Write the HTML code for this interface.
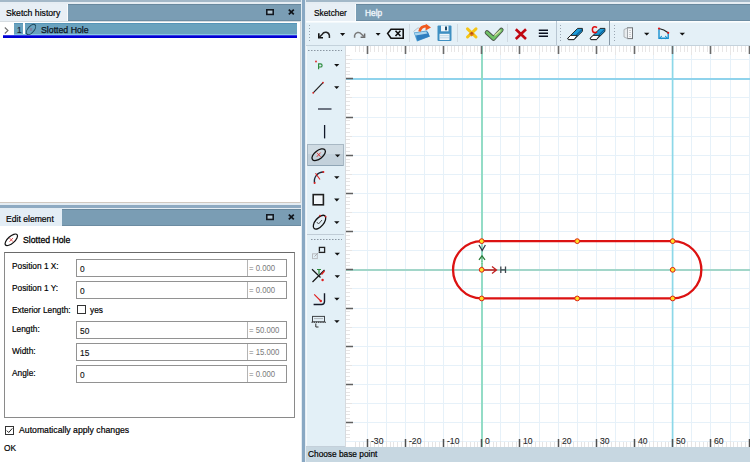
<!DOCTYPE html>
<html><head><meta charset="utf-8">
<style>
*{margin:0;padding:0;box-sizing:border-box}
html,body{width:750px;height:462px;overflow:hidden;background:#fff;font-family:"Liberation Sans",sans-serif;color:#000}
.a{position:absolute}
.t{position:absolute;white-space:pre;font-size:9.5px;line-height:12px;color:#000;-webkit-text-stroke:0.2px currentColor;transform:scaleX(0.875);transform-origin:0 0}
.inp{position:absolute;left:76px;width:211px;height:18px;border:1px solid #929292;background:#fff}
.inp .v{position:absolute;left:2.6px;top:2.9px;font-size:9.7px;line-height:12px;color:#111;white-space:pre;transform:scaleX(0.86);transform-origin:0 0;-webkit-text-stroke:0.15px #111}
.inp .d{position:absolute;left:170px;top:0;width:1px;height:16px;background:#b4b4b4}
.inp .e{position:absolute;left:171.5px;top:1.8px;font-size:9.7px;line-height:12px;color:#7a7a7a;white-space:pre;transform:scaleX(0.8);transform-origin:0 0}
.dd{position:absolute;width:0;height:0;border-left:2.5px solid transparent;border-right:2.5px solid transparent;border-top:3px solid #111}
svg{position:absolute;overflow:visible}
</style></head><body>
<!-- top strip -->
<div class="a" style="left:0;top:0;width:750px;height:2px;background:#a3b8c8"></div>
<div class="a" style="left:0;top:2px;width:750px;height:2px;background:#e6edf3"></div>

<!-- LEFT TOP PANEL -->
<div class="a" style="left:0;top:4px;width:301px;height:17px;background:#7a9db4;border-top:1px solid #68889e;border-bottom:1px solid #6c8ca2"></div>
<div class="a" style="left:0;top:4px;width:68px;height:17px;background:#e8eff5;border-right:1px solid #fafcfd"></div>
<div class="t" style="left:6px;top:7.2px;transform:scaleX(0.91)">Sketch history</div>
<svg style="left:266px;top:9px" width="8" height="7" viewBox="0 0 8 7"><rect x="0.8" y="0.8" width="6.4" height="4.6" fill="#bcd0dc" stroke="#121820" stroke-width="1.6"/><path d="M2 3.1H6" stroke="#8aa6b8" stroke-width="0.6"/></svg>
<svg style="left:287.6px;top:9px" width="7" height="6" viewBox="0 0 7 6"><path d="M0.8 0.6L5.8 5.4M5.8 0.6L0.8 5.4" stroke="#10141a" stroke-width="1.7"/></svg>
<div class="a" style="left:0;top:21px;width:301px;height:1px;background:#d6dce1"></div>
<div class="a" style="left:0;top:22px;width:301px;height:181px;background:#fff;border-right:1px solid #d8d8d8;border-bottom:1px solid #d0c8c0"></div>
<!-- tree row -->
<svg style="left:4px;top:27px" width="5" height="7" viewBox="0 0 5 7"><path d="M0.8 0.5L4 3.5L0.8 6.5" stroke="#707070" stroke-width="1.1" fill="none"/></svg>
<div class="a" style="left:14px;top:23px;width:9px;height:11px;background:#6aa2be;border-top:1px solid #5595b8"></div>
<div class="t" style="left:16.5px;top:23.5px;color:#1a2a3a">1</div>
<div class="a" style="left:25px;top:23px;width:272px;height:11px;background:#6aa2be;border-top:1px solid #5595b8"></div>
<div class="a" style="left:14px;top:34px;width:283px;height:1px;background:#88c8e0"></div>
<svg style="left:25px;top:24px" width="12" height="11" viewBox="0 0 12 11"><ellipse cx="6" cy="5.5" rx="6.2" ry="3.1" transform="rotate(-50 6 5.5)" fill="none" stroke="#1f4a5e" stroke-width="1"/><path d="M5 4L7 7M7 4L5 7" stroke="#8a6a8a" stroke-width="0.7"/></svg>
<div class="t" style="left:41px;top:24.1px;color:#0a1420;transform:scaleX(0.92);-webkit-text-stroke:0.25px #0a1420">Slotted Hole</div>
<div class="a" style="left:3px;top:35px;width:294px;height:3px;background:#0000d2;border-top:1px solid #3a3ae6"></div>

<!-- SPLITTERS -->
<div class="a" style="left:0;top:203px;width:301px;height:6px;background:#e4ecf2"></div>
<div class="a" style="left:0;top:205px;width:302px;height:3px;background:#8eaac2"></div>
<div class="a" style="left:301px;top:0;width:5px;height:462px;background:#e4ecf2"></div>
<div class="a" style="left:302px;top:0;width:3px;height:462px;background:#89a8c3"></div>

<!-- LEFT BOTTOM PANEL -->
<div class="a" style="left:0;top:209px;width:301px;height:17px;background:#7a9db4;border-top:1px solid #68889e;border-bottom:1px solid #6c8ca2"></div>
<div class="a" style="left:0;top:209px;width:62px;height:17px;background:#e3edf5"></div>
<div class="t" style="left:6px;top:213.2px;transform:scaleX(0.905)">Edit element</div>
<svg style="left:266px;top:214px" width="8" height="7" viewBox="0 0 8 7"><rect x="0.8" y="0.8" width="6.4" height="4.6" fill="#bcd0dc" stroke="#121820" stroke-width="1.6"/><path d="M2 3.1H6" stroke="#8aa6b8" stroke-width="0.6"/></svg>
<svg style="left:287.6px;top:214px" width="7" height="6" viewBox="0 0 7 6"><path d="M0.8 0.6L5.8 5.4M5.8 0.6L0.8 5.4" stroke="#10141a" stroke-width="1.7"/></svg>

<svg style="left:4px;top:233px" width="15" height="14" viewBox="0 0 15 14"><ellipse cx="7.3" cy="6.8" rx="7.8" ry="3.4" transform="rotate(-42 7.3 6.8)" fill="none" stroke="#111" stroke-width="1.2"/><path d="M5.5 5L9 8.7M9 5L5.5 8.7" stroke="#e03030" stroke-width="0.8"/></svg>
<div class="t" style="left:23px;top:234.4px;transform:scaleX(0.915);-webkit-text-stroke:0.3px #000">Slotted Hole</div>

<div class="a" style="left:4px;top:252px;width:291px;height:166px;border:1px solid #8a8a8a;border-top-color:#6a6a6a"></div>
<div class="t" style="left:11.5px;top:260.4px">Position 1 X:</div>
<div class="inp" style="top:259px"><span class="v">0</span><span class="d"></span><span class="e">= 0.000</span></div>
<div class="t" style="left:11.5px;top:282.2px">Position 1 Y:</div>
<div class="inp" style="top:281px"><span class="v">0</span><span class="d"></span><span class="e">= 0.000</span></div>
<div class="t" style="left:11.5px;top:304.1px">Exterior Length:</div>
<div class="a" style="left:77px;top:305px;width:9px;height:9px;border:1px solid #333;background:#fff"></div>
<div class="t" style="left:90px;top:304.1px">yes</div>
<div class="t" style="left:11.5px;top:323.2px">Length:</div>
<div class="inp" style="top:321px"><span class="v">50</span><span class="d"></span><span class="e">= 50.000</span></div>
<div class="t" style="left:11.5px;top:345.2px">Width:</div>
<div class="inp" style="top:343px"><span class="v">15</span><span class="d"></span><span class="e">= 15.000</span></div>
<div class="t" style="left:11.5px;top:367px">Angle:</div>
<div class="inp" style="top:365px"><span class="v">0</span><span class="d"></span><span class="e">= 0.000</span></div>

<div class="a" style="left:5px;top:426px;width:9px;height:9px;border:1px solid #333;background:#fff"></div>
<svg style="left:5px;top:426px" width="9" height="9" viewBox="0 0 9 9"><path d="M1.8 4.6L3.7 6.5L7.3 2.4" stroke="#222" stroke-width="1" fill="none"/></svg>
<div class="t" style="left:18.5px;top:423.9px;transform:scaleX(0.915)">Automatically apply changes</div>
<div class="t" style="left:4px;top:442.4px">OK</div>

<!-- RIGHT PANEL -->
<div class="a" style="left:306px;top:4px;width:444px;height:17px;background:#7a9db4;border-top:1px solid #68889e;border-bottom:1px solid #6c8ca2"></div>
<div class="a" style="left:306px;top:4px;width:50px;height:17px;background:#e8eff5;border-right:1px solid #f8fbfd"></div>
<div class="t" style="left:314.3px;top:7.1px">Sketcher</div>
<div class="t" style="left:365px;top:7.2px;color:#e8f0f6;-webkit-text-stroke:0.5px #e8f0f6">Help</div>
<div class="a" style="left:306px;top:21px;width:444px;height:25px;background:#e4f0f7;border-top:1px solid #fcfeff;border-bottom:1px solid #c4d2dc"></div>
<div class="a" style="left:306px;top:22px;width:444px;height:1px;background:#f2f8fb"></div>
<div class="a" style="left:306px;top:46px;width:39px;height:401px;background:#e3f0f7;border-left:1px solid #f4f9fc"></div>
<div class="a" style="left:306px;top:446px;width:39px;height:1px;background:#c4d0da"></div>
<div class="a" style="left:306px;top:447px;width:444px;height:15px;background:#c7d7e1"></div>
<div class="t" style="left:308px;top:448.4px">Choose base point</div>


<svg style="left:0;top:0" width="750" height="462" viewBox="0 0 750 462">
<!-- top toolbar grips -->
<path d="M309.5 25V42.5" stroke="#9aa6b2" stroke-width="1" stroke-dasharray="1 2"/>
<path d="M560.5 25V42.5" stroke="#9aa6b2" stroke-width="1" stroke-dasharray="1 2"/>
<path d="M614.5 25V42.5" stroke="#9aa6b2" stroke-width="1" stroke-dasharray="1 2"/>
<!-- separators -->
<path d="M409.5 24V42M457.5 24V42M507.5 24V42" stroke="#d0dae2" stroke-width="1"/>
<path d="M556.5 21V45" stroke="#b8c6d2" stroke-width="1"/>
<path d="M609.5 21V45" stroke="#8898a6" stroke-width="1"/>
<!-- undo -->
<path d="M318.8 33.2V37.7H323" stroke="#141414" stroke-width="1.6" fill="none"/>
<path d="M319 37.5L322.3 34.2A3.8 3.8 0 0 1 329.4 35.6V38" stroke="#252525" stroke-width="1.5" fill="none"/>
<path d="M340 33H345.2L342.6 36Z" fill="#111"/>
<!-- redo -->
<path d="M364.6 33.4V37.3H360.6" stroke="#6a6a6a" stroke-width="1.5" fill="none"/>
<path d="M364.4 37.1L361.3 34A3.8 3.8 0 0 0 354.6 35.4V37.8" stroke="#7a7a7a" stroke-width="1.5" fill="none"/>
<path d="M375.6 33H380.6L378.1 35.8Z" fill="#111"/>
<!-- backspace -->
<path d="M387.6 33.4L391 29.2H403.2V38.2H391Z" stroke="#111" stroke-width="1.6" fill="none" stroke-linejoin="miter"/>
<path d="M395.5 30.8L400.4 36M400.4 30.8L395.5 36" stroke="#111" stroke-width="1.6"/>
<!-- folder -->
<path d="M413.5 31.5L418 27.8L421 29" stroke="#b8c0c8" stroke-width="1" fill="none"/>
<path d="M413.8 32.5L427 30.5L430 36.5L417 41.5Z" fill="#4a9ad0"/>
<path d="M416 34L428 32L429.5 36.5L417.5 40.8Z" fill="#2f7ec0"/>
<path d="M414.5 33L426 31.5L427.5 33.5L415.5 35.5Z" fill="#a8d4ee"/>
<path d="M419.5 31.5Q421 25.5 427.5 26.2" stroke="#f05a1e" stroke-width="2.6" fill="none"/>
<path d="M425.8 23.8L431 27.5L425.5 30.5Z" fill="#f05a1e"/>
<!-- floppy -->
<rect x="437.5" y="25.5" width="14" height="15.6" rx="1" fill="#3e8fc2"/>
<rect x="441" y="25.5" width="7.5" height="5.8" fill="#f0f6fa"/>
<rect x="445" y="26.5" width="2" height="3.8" fill="#1d4c6c"/>
<rect x="439.5" y="33.8" width="10" height="6.2" fill="#eef5fa"/>
<path d="M440 35.7H449M440 37.8H449" stroke="#b0cce0" stroke-width="0.8"/>
<!-- yellow X -->
<path d="M467.5 28.8L476 37M476 28.8L467.5 37" stroke="#f5c515" stroke-width="3" stroke-linecap="round"/>
<path d="M469 34L471.7 31.5L474.5 34L471.7 36.5Z" fill="#e08018"/>
<circle cx="471.7" cy="33.3" r="1.2" fill="#b8501a"/>
<!-- green check -->
<path d="M487 32.5L493.5 38.5L501.3 30" stroke="#4a544a" stroke-width="4.6" fill="none" stroke-linejoin="round" stroke-linecap="round"/>
<path d="M487 32.5L493.5 38.5L501.3 30" stroke="#70c266" stroke-width="2.8" fill="none" stroke-linejoin="round" stroke-linecap="round"/>
<path d="M494.5 35.5L500.5 30.3" stroke="#d0e0a0" stroke-width="1.6" fill="none"/>
<!-- red X -->
<path d="M515.8 29.2L526 39M526 29.2L515.8 39" stroke="#c00812" stroke-width="2.6"/>
<!-- hamburger -->
<path d="M538.8 30.3H548M538.8 33.3H548M538.8 36.2H548" stroke="#0a1020" stroke-width="1.4"/>
<!-- eraser 1 -->
<polygon points="567.8,38.2 577.6,28.4 582.4,28.4 582.4,31.4 574.0,39.6 568.4,39.6" fill="#1d9bd8" stroke="#151515" stroke-width="0.9" stroke-linejoin="round"/>
<polygon points="567.8,38.2 570.6,35.4 577.2,35.4 574.0,39.6 568.4,39.6" fill="#fff" stroke="#151515" stroke-width="0.9" stroke-linejoin="round"/>
<path d="M576.5 34.8L582 29.6" stroke="#0b5a92" stroke-width="1.1"/>
<!-- eraser 2 -->
<polygon points="590.3,38.2 600.1,28.4 604.9,28.4 604.9,31.4 596.5,39.6 590.9,39.6" fill="#1d9bd8" stroke="#151515" stroke-width="0.9" stroke-linejoin="round"/>
<polygon points="590.3,38.2 593.1,35.4 599.7,35.4 596.5,39.6 590.9,39.6" fill="#fff" stroke="#151515" stroke-width="0.9" stroke-linejoin="round"/>
<path d="M599.0 34.8L604.5 29.6" stroke="#0b5a92" stroke-width="1.1"/>
<path d="M597 27.6Q596 26.8 594.8 26.8Q592.4 26.8 592.4 29.7Q592.4 32.6 594.8 32.6Q596 32.6 597 31.8" stroke="#e01010" stroke-width="1.5" fill="none"/>
<!-- gray mirror icon -->
<rect x="627.5" y="27.8" width="5" height="10.8" fill="#f4f6f8" stroke="#707478" stroke-width="1"/>
<path d="M624 29.5L627.5 28V38.5L624 37Z" fill="#e8ecef" stroke="#a0a4a8" stroke-width="0.8"/>
<path d="M630 30V37" stroke="#909498" stroke-width="0.8" stroke-dasharray="1 1"/>
<path d="M644 32.8H649.4L646.7 35.6Z" fill="#111"/>
<!-- polygon icon -->
<path d="M659 28.5V38.2H668.2V32.8" stroke="#1890d0" stroke-width="1.4" fill="none"/>
<path d="M659 28.5Q664 29.5 668.2 32.8" stroke="#202020" stroke-width="1.2" fill="none"/>
<circle cx="659" cy="28.5" r="1.1" fill="#e01818"/><circle cx="668.2" cy="32.8" r="1.1" fill="#e01818"/>
<path d="M660 37.5L662 36M660 37.5L662 39M667 37.5L665 36M667 37.5L665 39" stroke="#1890d0" stroke-width="1"/>
<path d="M679.6 32.8H685L682.3 35.6Z" fill="#111"/>

<!-- VERTICAL TOOLBAR -->
<path d="M308 50.5H342" stroke="#8a96a2" stroke-width="1.2" stroke-dasharray="1.5 1.5"/>
<path d="M307 234.5H344" stroke="#c0ccd6" stroke-width="1"/>
<path d="M311 239.5H342" stroke="#8a96a2" stroke-width="1.2" stroke-dasharray="1.5 1.5"/>
<!-- point P -->
<circle cx="316" cy="61.5" r="0.9" fill="#e02020"/>
<path d="M318.6 69.2V63.8H320.5Q322.1 63.8 322.1 65.4Q322.1 67 320.5 67H318.6" stroke="#2a8a3a" stroke-width="1.15" fill="none"/>
<path d="M334.1 64H339.3L336.7 66.8Z" fill="#111"/>
<!-- line -->
<path d="M313.2 92.8L323 82.6" stroke="#202020" stroke-width="1.2"/>
<circle cx="313.2" cy="92.8" r="0.9" fill="#e02020"/><circle cx="323" cy="82.6" r="0.9" fill="#e02020"/>
<path d="M334.1 86.3H339.3L336.7 89.1Z" fill="#111"/>
<!-- hline -->
<path d="M318 109H331.5" stroke="#3a4050" stroke-width="1.4"/>
<!-- vline -->
<path d="M324.6 125V138.4" stroke="#101828" stroke-width="1.3"/>
<!-- pressed button -->
<rect x="307.5" y="144.5" width="36" height="21" fill="#c3d1db" stroke="#a8b8c4" stroke-width="1"/>
<rect x="308" y="145" width="35" height="9" fill="#cfdbe3"/>
<path d="M308 165.5H343" stroke="#90a6b6" stroke-width="1"/>
<ellipse cx="318.7" cy="154.7" rx="7.9" ry="4.1" transform="rotate(-38 318.7 154.7)" fill="none" stroke="#111" stroke-width="1.3"/>
<path d="M316.8 152.6L320.6 156.8M320.6 152.6L316.8 156.8" stroke="#e02828" stroke-width="0.9"/>
<path d="M334.9 154.4H340.3L337.6 157.2Z" fill="#111"/>
<!-- arc -->
<path d="M314.6 183A9 9 0 0 1 323.4 172" stroke="#202838" stroke-width="1.4" fill="none"/>
<path d="M315.5 173.3L320 179.5" stroke="#e02020" stroke-width="1.1"/>
<circle cx="323.4" cy="172" r="1" fill="#e02020"/><circle cx="314.6" cy="183" r="1" fill="#e02020"/>
<path d="M334.1 176.3H339.5L336.8 179.1Z" fill="#111"/>
<!-- rect -->
<rect x="313.2" y="194.6" width="10.2" height="10.2" fill="#f2f6f9" stroke="#202020" stroke-width="1.6"/>
<path d="M334.1 198.6H339.5L336.8 201.4Z" fill="#111"/>
<!-- ellipse check -->
<ellipse cx="319.5" cy="222.2" rx="8.3" ry="4.2" transform="rotate(-50 319.5 222.2)" fill="none" stroke="#111" stroke-width="1.3"/>
<path d="M316.8 222L318.5 224L322 220" stroke="#404040" stroke-width="0.9" fill="none"/>
<circle cx="320" cy="215.6" r="0.9" fill="#e02020"/><circle cx="325.6" cy="216.6" r="0.9" fill="#e02020"/>
<path d="M334.1 221.3H339.5L336.8 224.1Z" fill="#111"/>
<!-- icon offset -->
<rect x="319.4" y="247.4" width="5.2" height="5" fill="none" stroke="#222" stroke-width="1.3"/>
<rect x="312.5" y="253.8" width="4.8" height="4.8" fill="none" stroke="#b8bcc0" stroke-width="1"/>
<path d="M314.5 256.5L319.5 251.5" stroke="#a8acb0" stroke-width="1"/>
<path d="M334.6 252.8H340L337.3 255.6Z" fill="#111"/>
<!-- trim -->
<path d="M312 269.3L320.5 277.5M312.5 282L324.5 270" stroke="#151515" stroke-width="1.2"/>
<path d="M317 269.5H321M319 269.5V274" stroke="#2a8a3a" stroke-width="1.2"/>
<path d="M321.5 274.5L324.5 271" stroke="#e02020" stroke-width="1.3"/>
<circle cx="322.6" cy="280" r="1.2" fill="#e02020"/>
<path d="M334.6 275.3H340L337.3 278.1Z" fill="#111"/>
<!-- fillet -->
<path d="M324.5 293.2V301.5Q324.5 304.5 321.5 304.5H313.6" stroke="#151a28" stroke-width="1.4" fill="none"/>
<path d="M314.2 294.3L320.8 301" stroke="#e02020" stroke-width="1.1"/>
<circle cx="320.8" cy="301" r="1.2" fill="#e02020"/>
<path d="M334.2 297.7H339.6L336.9 300.5Z" fill="#111"/>
<!-- dimension -->
<rect x="312.5" y="316.4" width="12" height="5.4" fill="none" stroke="#404448" stroke-width="1"/>
<path d="M314 318.6H323" stroke="#a0a4a8" stroke-width="0.8"/>
<path d="M311.5 322.2H326" stroke="#222" stroke-width="1.1" stroke-dasharray="1.2 1"/>
<path d="M315.8 323.5V327H318.5" stroke="#333" stroke-width="1" fill="none"/>
<path d="M334.2 320.3H339.6L336.9 323.1Z" fill="#111"/>
</svg>

<svg style="left:345px;top:46px" width="405" height="401" viewBox="345 46 405 401">
<path d="M367.5 46V447M386.5 46V447M405.5 46V447M424.5 46V447M443.5 46V447M462.5 46V447M500.5 46V447M519.5 46V447M539.5 46V447M558.5 46V447M577.5 46V447M596.5 46V447M615.5 46V447M634.5 46V447M653.5 46V447M691.5 46V447M710.5 46V447M730.5 46V447M749.5 46V447M345 441.5H750M345 422.5H750M345 403.5H750M345 384.5H750M345 365.5H750M345 346.5H750M345 327.5H750M345 308.5H750M345 288.5H750M345 250.5H750M345 231.5H750M345 212.5H750M345 193.5H750M345 174.5H750M345 155.5H750M345 136.5H750M345 117.5H750M345 97.5H750M345 59.5H750" stroke="#e6f1f9" stroke-width="1" fill="none"/>
<path d="M345 79H750" stroke="#8fd3ec" stroke-width="2"/>
<path d="M345 270H750" stroke="#a2d6c9" stroke-width="2"/>
<path d="M482 46V447" stroke="#93dcc6" stroke-width="2"/>
<path d="M672.6 46V447" stroke="#8cd8e8" stroke-width="1.7"/>
<path d="M355.5 46V52M359.5 46V52M363.5 46V52M370.5 46V52M374.5 46V52M378.5 46V52M382.5 46V52M386.5 46V55M390.5 46V52M393.5 46V52M397.5 46V52M401.5 46V52M409.5 46V52M412.5 46V52M416.5 46V52M420.5 46V52M424.5 46V55M428.5 46V52M432.5 46V52M435.5 46V52M439.5 46V52M447.5 46V52M451.5 46V52M454.5 46V52M458.5 46V52M462.5 46V55M466.5 46V52M470.5 46V52M474.5 46V52M477.5 46V52M485.5 46V52M489.5 46V52M493.5 46V52M496.5 46V52M500.5 46V55M504.5 46V52M508.5 46V52M512.5 46V52M516.5 46V52M523.5 46V52M527.5 46V52M531.5 46V52M535.5 46V52M539.5 46V55M542.5 46V52M546.5 46V52M550.5 46V52M554.5 46V52M561.5 46V52M565.5 46V52M569.5 46V52M573.5 46V52M577.5 46V55M581.5 46V52M584.5 46V52M588.5 46V52M592.5 46V52M600.5 46V52M603.5 46V52M607.5 46V52M611.5 46V52M615.5 46V55M619.5 46V52M623.5 46V52M626.5 46V52M630.5 46V52M638.5 46V52M642.5 46V52M645.5 46V52M649.5 46V52M653.5 46V55M657.5 46V52M661.5 46V52M665.5 46V52M668.5 46V52M676.5 46V52M680.5 46V52M684.5 46V52M687.5 46V52M691.5 46V55M695.5 46V52M699.5 46V52M703.5 46V52M707.5 46V52M714.5 46V52M718.5 46V52M722.5 46V52M726.5 46V52M730.5 46V55M733.5 46V52M737.5 46V52M741.5 46V52M745.5 46V52" stroke="#e8e6e6" stroke-width="1"/>
<path d="M367.5 46V54M405.5 46V54M443.5 46V54M481.5 46V54M519.5 46V54M558.5 46V54M596.5 46V54M634.5 46V54M672.5 46V54M710.5 46V54M749.5 46V54" stroke="#6a6a6a" stroke-width="1.6"/>
<path d="M345 437.5H350M345 434.5H350M345 430.5H350M345 426.5H350M345 418.5H350M345 414.5H350M345 411.5H350M345 407.5H350M345 403.5H352M345 399.5H350M345 395.5H350M345 392.5H350M345 388.5H350M345 380.5H350M345 376.5H350M345 372.5H350M345 369.5H350M345 365.5H352M345 361.5H350M345 357.5H350M345 353.5H350M345 350.5H350M345 342.5H350M345 338.5H350M345 334.5H350M345 330.5H350M345 327.5H352M345 323.5H350M345 319.5H350M345 315.5H350M345 311.5H350M345 304.5H350M345 300.5H350M345 296.5H350M345 292.5H350M345 288.5H352M345 285.5H350M345 281.5H350M345 277.5H350M345 273.5H350M345 265.5H350M345 262.5H350M345 258.5H350M345 254.5H350M345 250.5H352M345 246.5H350M345 243.5H350M345 239.5H350M345 235.5H350M345 227.5H350M345 223.5H350M345 220.5H350M345 216.5H350M345 212.5H352M345 208.5H350M345 204.5H350M345 201.5H350M345 197.5H350M345 189.5H350M345 185.5H350M345 181.5H350M345 178.5H350M345 174.5H352M345 170.5H350M345 166.5H350M345 162.5H350M345 159.5H350M345 151.5H350M345 147.5H350M345 143.5H350M345 139.5H350M345 136.5H352M345 132.5H350M345 128.5H350M345 124.5H350M345 120.5H350M345 113.5H350M345 109.5H350M345 105.5H350M345 101.5H350M345 97.5H352M345 94.5H350M345 90.5H350M345 86.5H350M345 82.5H350M345 74.5H350M345 71.5H350M345 67.5H350M345 63.5H350M345 59.5H352M345 55.5H350" stroke="#e6e4e4" stroke-width="1"/>
<path d="M345 422.5H353M345 384.5H353M345 346.5H353M345 308.5H353M345 269.5H353M345 231.5H353M345 193.5H353M345 155.5H353M345 117.5H353M345 78.5H353" stroke="#606060" stroke-width="1.5"/>
<path d="M345.5 46V447" stroke="#d6dade" stroke-width="1"/>
<path d="M355.5 442V447M359.5 442V447M363.5 442V447M370.5 442V447M374.5 442V447M378.5 442V447M382.5 442V447M386.5 441V447M390.5 442V447M393.5 442V447M397.5 442V447M401.5 442V447M409.5 442V447M412.5 442V447M416.5 442V447M420.5 442V447M424.5 441V447M428.5 442V447M432.5 442V447M435.5 442V447M439.5 442V447M447.5 442V447M451.5 442V447M454.5 442V447M458.5 442V447M462.5 441V447M466.5 442V447M470.5 442V447M474.5 442V447M477.5 442V447M485.5 442V447M489.5 442V447M493.5 442V447M496.5 442V447M500.5 441V447M504.5 442V447M508.5 442V447M512.5 442V447M516.5 442V447M523.5 442V447M527.5 442V447M531.5 442V447M535.5 442V447M539.5 441V447M542.5 442V447M546.5 442V447M550.5 442V447M554.5 442V447M561.5 442V447M565.5 442V447M569.5 442V447M573.5 442V447M577.5 441V447M581.5 442V447M584.5 442V447M588.5 442V447M592.5 442V447M600.5 442V447M603.5 442V447M607.5 442V447M611.5 442V447M615.5 441V447M619.5 442V447M623.5 442V447M626.5 442V447M630.5 442V447M638.5 442V447M642.5 442V447M645.5 442V447M649.5 442V447M653.5 441V447M657.5 442V447M661.5 442V447M665.5 442V447M668.5 442V447M676.5 442V447M680.5 442V447M684.5 442V447M687.5 442V447M691.5 441V447M695.5 442V447M699.5 442V447M703.5 442V447M707.5 442V447M714.5 442V447M718.5 442V447M722.5 442V447M726.5 442V447M730.5 441V447M733.5 442V447M737.5 442V447M741.5 442V447M745.5 442V447" stroke="#e6e4e4" stroke-width="1"/>
<path d="M367.5 439V447M405.5 439V447M443.5 439V447M481.5 439V447M519.5 439V447M558.5 439V447M596.5 439V447M634.5 439V447M672.5 439V447M710.5 439V447M749.5 439V447" stroke="#505050" stroke-width="1.5"/>
<g font-family="Liberation Sans" font-size="8.6" fill="#2a2a2a" stroke="#2a2a2a" stroke-width="0.1"><text x="371.0" y="444">-30</text><text x="409.0" y="444">-20</text><text x="447.0" y="444">-10</text><text x="485.0" y="444">0</text><text x="523.0" y="444">10</text><text x="562.0" y="444">20</text><text x="600.0" y="444">30</text><text x="638.0" y="444">40</text><text x="676.0" y="444">50</text><text x="714.0" y="444">60</text><text x="753.0" y="444">70</text></g>
<path d="M481.70 241.15H672.70A28.65 28.65 0 0 1 672.70 298.45H481.70A28.65 28.65 0 0 1 481.70 241.15Z" fill="none" stroke="#dc1212" stroke-width="2.3"/>
<path d="M482 270H496M492 266.5L496.5 270L492 273.5" stroke="#c02020" stroke-width="1.3" fill="none"/>
<path d="M482 267V257" stroke="#6cc070" stroke-width="1.1" stroke-dasharray="1.5 1" fill="none"/>
<path d="M479 259.8L482 255.8L485 259.8" stroke="#2a7a3a" stroke-width="1.3" fill="none"/>
<path d="M479 245L482.2 250.5L485.4 245" stroke="#303848" stroke-width="1.3" fill="none"/>
<path d="M500.8 266.5V273M505.5 266.5V273M500.8 269.8H505.5" stroke="#404850" stroke-width="1.3" fill="none"/>
<circle cx="481.70" cy="241.15" r="2.4" fill="#ffe02a" stroke="#e02010" stroke-width="1"/>
<circle cx="577.20" cy="241.15" r="2.4" fill="#ffe02a" stroke="#e02010" stroke-width="1"/>
<circle cx="672.70" cy="241.15" r="2.4" fill="#ffe02a" stroke="#e02010" stroke-width="1"/>
<circle cx="481.70" cy="298.45" r="2.4" fill="#ffe02a" stroke="#e02010" stroke-width="1"/>
<circle cx="577.20" cy="298.45" r="2.4" fill="#ffe02a" stroke="#e02010" stroke-width="1"/>
<circle cx="672.70" cy="298.45" r="2.4" fill="#ffe02a" stroke="#e02010" stroke-width="1"/>
<circle cx="672.70" cy="269.80" r="2.4" fill="#ffe02a" stroke="#e02010" stroke-width="1"/>
<circle cx="481.70" cy="269.80" r="2.4" fill="#ffe02a" stroke="#e02010" stroke-width="1"/>
</svg>
</body></html>
